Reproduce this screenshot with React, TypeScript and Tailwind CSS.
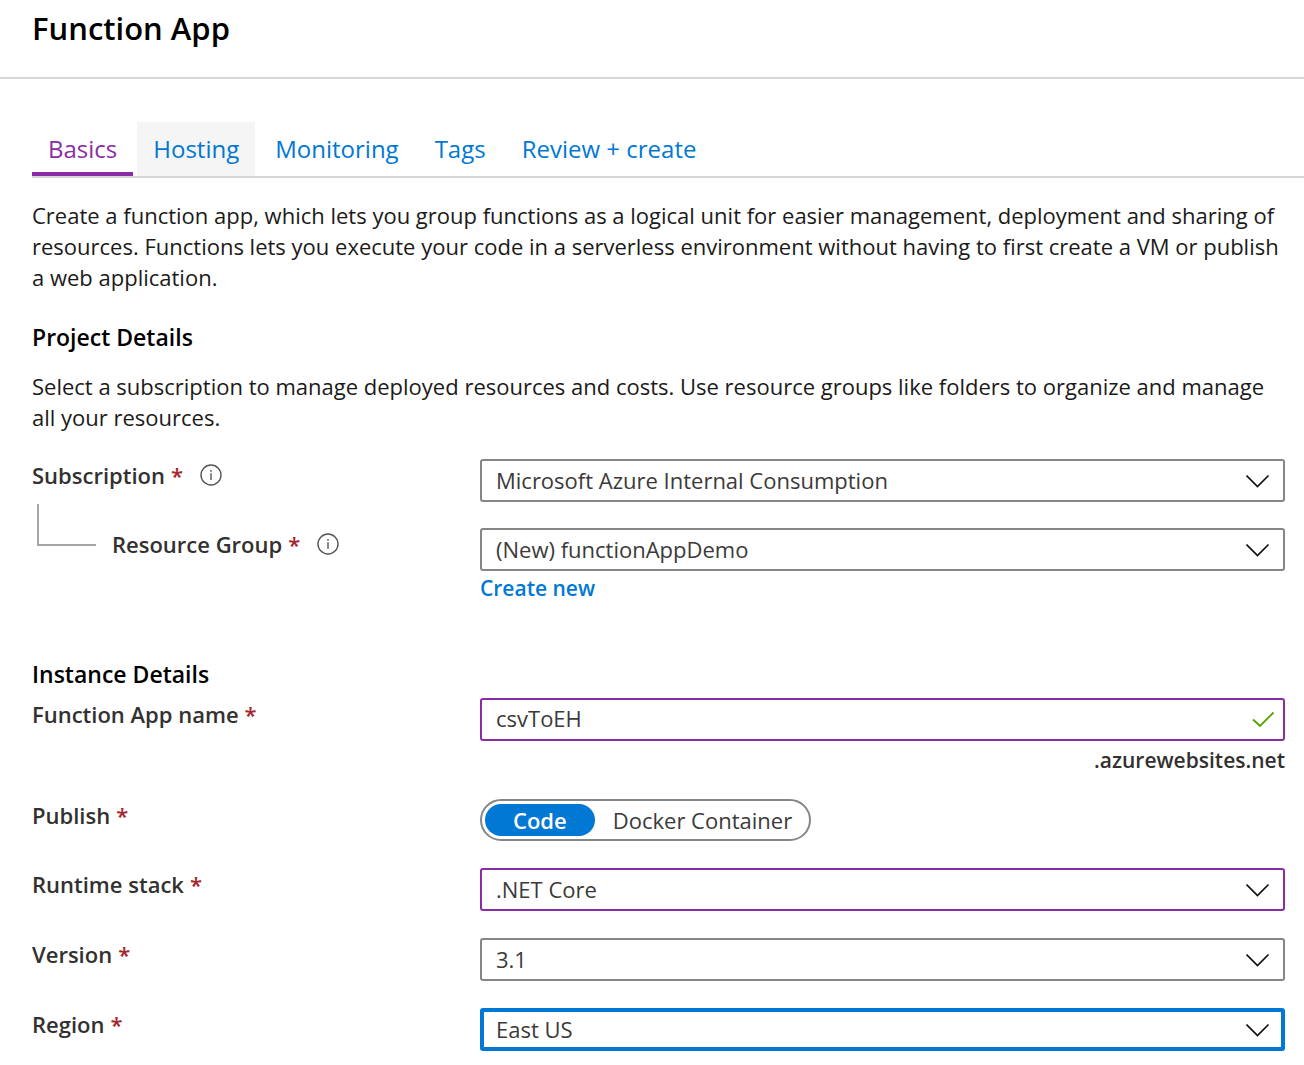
import { useId, useState, type ReactNode } from "react";

const tabs = ["Basics", "Hosting", "Monitoring", "Tags", "Review + create"];

function Chevron() {
  return (
    <svg
      className="pointer-events-none absolute top-1/2 right-[15px] h-6 w-6 -translate-y-1/2"
      viewBox="0 0 24 24"
      fill="none"
      stroke="#111111"
      strokeWidth="1.7"
      aria-hidden="true"
    >
      <path d="M0.5 6.5 11.5 17.5 22.5 6.5" />
    </svg>
  );
}

function Info({ about }: { about: string }) {
  return (
    <button type="button" aria-label={`About ${about}`} className="ml-4 shrink-0">
      <svg className="h-6 w-6" viewBox="0 0 24 24" fill="none" stroke="#555555" strokeWidth="1.4">
        <circle cx="12" cy="12" r="10" />
        <path d="M12 10.2V17" />
        <path d="M12 7V8.8" />
      </svg>
    </button>
  );
}

function Row({ label, htmlFor, id, info, indent, children }: {
  label: string;
  htmlFor?: string;
  id?: string;
  info?: boolean;
  indent?: boolean;
  children: ReactNode;
}) {
  return (
    <div className="grid grid-cols-[448px_minmax(0,1fr)]">
      <div className="relative flex h-8 items-center font-semibold text-[#323130]">
        {indent && (
          <span className="absolute -top-6 left-[5px] h-[42px] w-[59px] border-b-2 border-l-2 border-[#a6a6a6]" />
        )}
        <label htmlFor={htmlFor} id={id} className={indent ? "pl-20" : ""}>
          {label}
          <span className="ml-[6px] text-[#a4262c]">*</span>
        </label>
        {info && <Info about={label} />}
      </div>
      <div>{children}</div>
    </div>
  );
}

function SelectRow({ label, options, tone, info, indent, children }: {
  label: string;
  options: string[];
  tone: string;
  info?: boolean;
  indent?: boolean;
  children?: ReactNode;
}) {
  const id = useId();
  return (
    <Row label={label} htmlFor={id} info={info} indent={indent}>
      <div className="relative">
        <select
          id={id}
          className={`block h-[43px] w-full appearance-none rounded-[3px] border-0 bg-white pr-14 pl-4 text-[#3b3a39] ring-inset outline-none ${tone}`}
        >
          {options.map((o) => (
            <option key={o}>{o}</option>
          ))}
        </select>
        <Chevron />
      </div>
      {children}
    </Row>
  );
}

export default function App() {
  const [tab, setTab] = useState("Basics");
  const [publish, setPublish] = useState("Code");
  const nameId = useId();
  const publishId = useId();

  return (
    <div className="bg-white pb-3 font-['Open_Sans','Noto_Sans',sans-serif] text-[22px] leading-[31px] text-[#1b1a19]">
      <header className="border-b-2 border-[#d6d6d6] px-8 pt-2 pb-[29px]">
        <h1 className="text-[31px] leading-10 font-semibold text-black">Function App</h1>
      </header>

      <div className="pt-[43px] pl-8">
        <nav className="flex gap-1 border-b-2 border-[#d6d6d6]" role="tablist">
          {tabs.map((t) => (
            <button
              key={t}
              type="button"
              role="tab"
              aria-selected={t === tab}
              onClick={() => setTab(t)}
              className={`h-[54px] border-b-4 px-4 pt-[2px] text-[24px] ${
                t === tab ? "border-[#8a2da5] text-[#8a2da5]" : "border-transparent text-[#0078d4]"
              } ${t === "Hosting" ? "bg-[#f5f5f5]" : ""}`}
            >
              {t}
            </button>
          ))}
        </nav>
      </div>

      <main className="pr-[19px] pl-8">
        <p className="pt-[22px]">
          Create a function app, which lets you group functions as a logical unit for easier management, deployment and sharing of resources. Functions lets you execute your code in a serverless environment without having to first create a VM or publish a web application.
        </p>

        <h2 className="mt-[29px] text-[23px] font-semibold text-black">Project Details</h2>
        <p className="mt-[18px]">
          Select a subscription to manage deployed resources and costs. Use resource groups like folders to organize and manage all your resources.
        </p>

        <div className="mt-[26px] flex flex-col gap-[26px]">
          <SelectRow
            label="Subscription"
            options={["Microsoft Azure Internal Consumption"]}
            tone="ring-2 ring-[#868686]"
            info
          />
          <SelectRow
            label="Resource Group"
            options={["(New) functionAppDemo"]}
            tone="ring-2 ring-[#868686]"
            info
            indent
          >
            <a href="#create" className="mt-[2px] block w-fit text-[21px] font-semibold text-[#0078d4]">
              Create new
            </a>
          </SelectRow>
        </div>

        <h2 className="mt-[55px] text-[23px] font-semibold text-black">Instance Details</h2>
        <div className="mt-2 flex flex-col gap-[27px]">
          <Row label="Function App name" htmlFor={nameId}>
            <div className="relative">
              <input
                id={nameId}
                type="text"
                defaultValue="csvToEH"
                className="block h-[43px] w-full rounded-[3px] bg-white pr-14 pb-[3px] pl-4 text-[#3b3a39] ring-2 ring-[#8a2da5] outline-none ring-inset"
              />
              <svg
                className="pointer-events-none absolute top-1/2 right-[10px] h-6 w-6 -translate-y-1/2"
                viewBox="0 0 24 24"
                fill="none"
                stroke="#57a300"
                strokeWidth="1.9"
                aria-hidden="true"
              >
                <path d="M2 11.5 9 18 22.5 4.5" />
              </svg>
            </div>
            <p className="mt-[7px] text-right text-[21px] leading-6 font-semibold text-[#323130]">.azurewebsites.net</p>
          </Row>

          <Row label="Publish" id={publishId}>
            <div
              role="group"
              aria-labelledby={publishId}
              className="flex h-[42px] w-fit items-center rounded-full border-2 border-[#868686] p-[3px]"
            >
              {["Code", "Docker Container"].map((p) => (
                <button
                  key={p}
                  type="button"
                  aria-pressed={p === publish}
                  onClick={() => setPublish(p)}
                  className={`h-8 rounded-full ${
                    p === publish ? "bg-[#0078d4] px-7 font-semibold text-white" : "pr-[14px] pl-[18px] text-[#3b3a39]"
                  }`}
                >
                  {p}
                </button>
              ))}
            </div>
          </Row>

          <SelectRow label="Runtime stack" options={[".NET Core"]} tone="ring-2 ring-[#8a2da5]" />
          <SelectRow label="Version" options={["3.1"]} tone="ring-2 ring-[#868686]" />
          <SelectRow label="Region" options={["East US"]} tone="ring-4 ring-[#0078d4]" />
        </div>
      </main>
    </div>
  );
}
